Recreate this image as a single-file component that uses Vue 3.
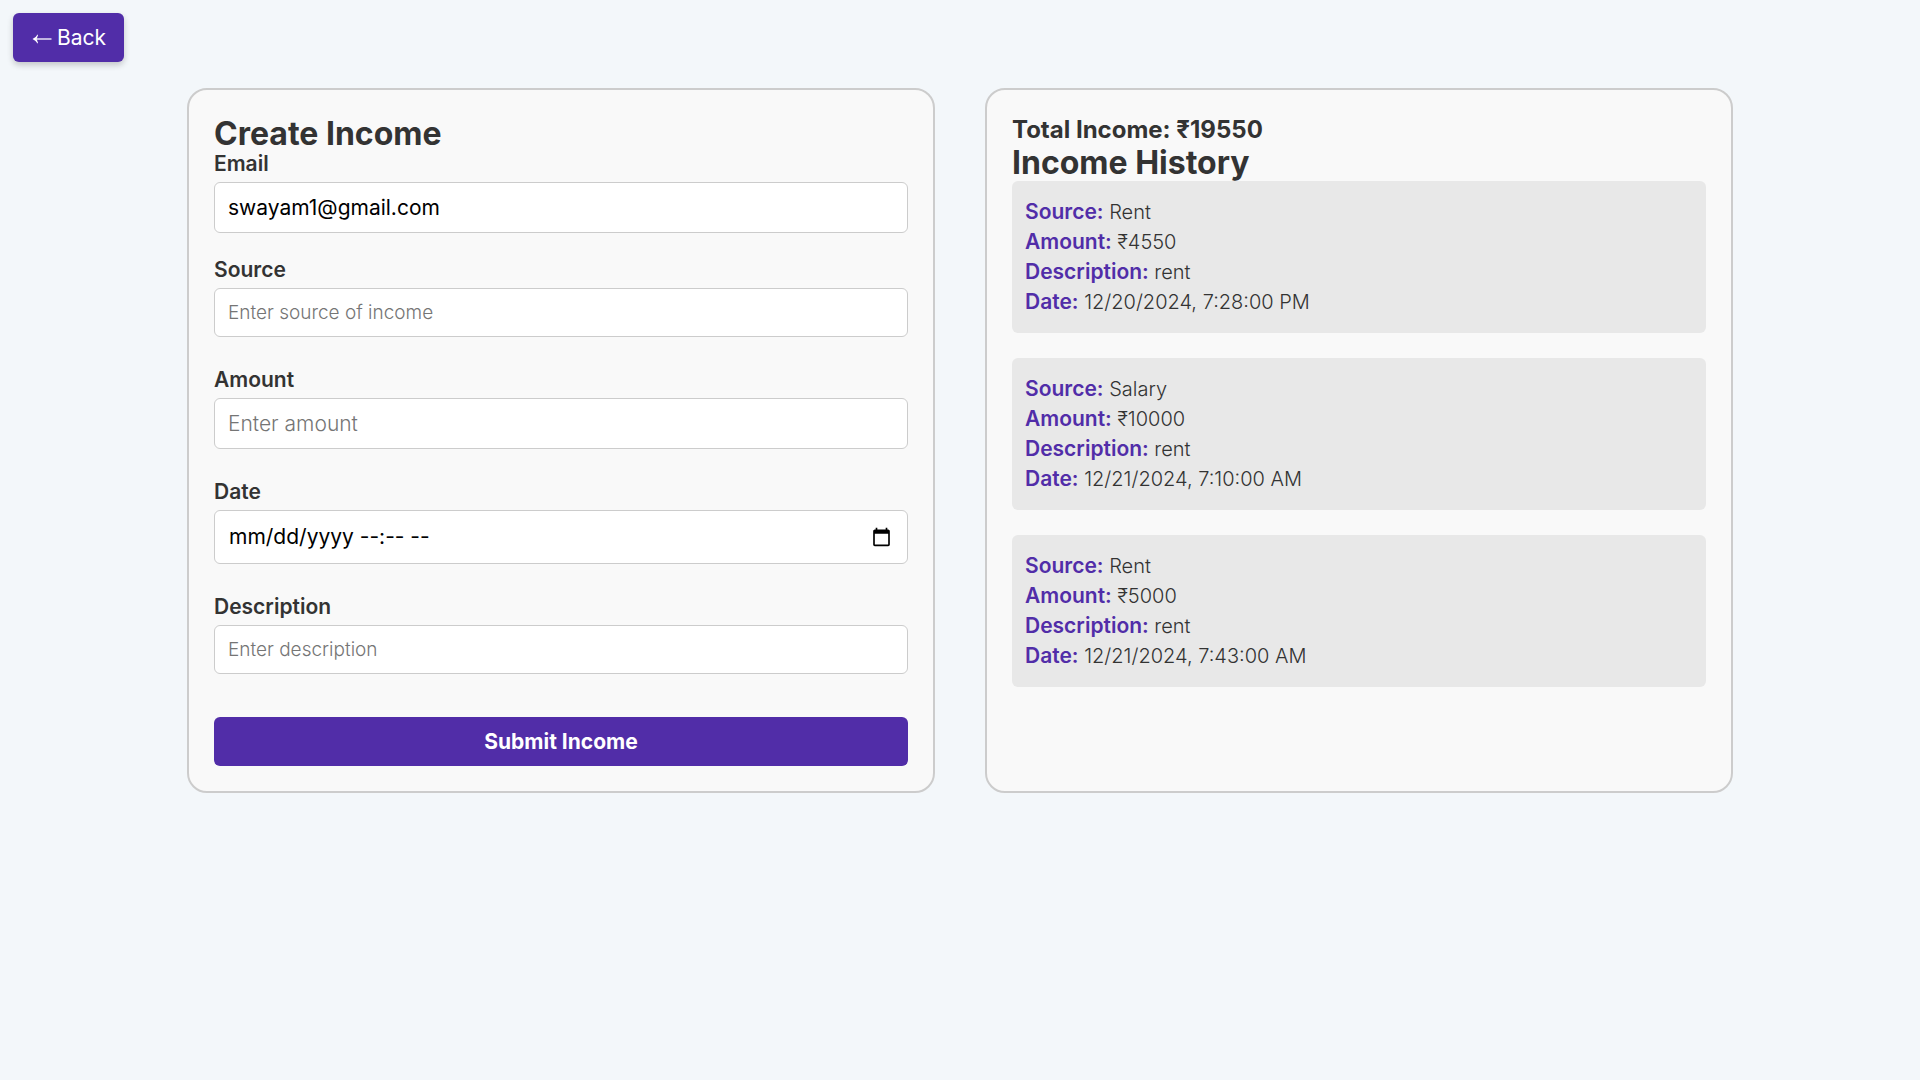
<script setup>
import { computed, ref } from 'vue'

const form = ref({ email: 'swayam1@gmail.com', source: '', amount: '', date: '', description: '' })
const editingDate = ref(false)

const incomes = ref([
  { id: 1, source: 'Rent', amount: 4550, description: 'rent', date: '12/20/2024, 7:28:00 PM' },
  { id: 2, source: 'Salary', amount: 10000, description: 'rent', date: '12/21/2024, 7:10:00 AM' },
  { id: 3, source: 'Rent', amount: 5000, description: 'rent', date: '12/21/2024, 7:43:00 AM' },
])

const total = computed(() => incomes.value.reduce((sum, item) => sum + item.amount, 0))
const showDateHint = computed(() => !form.value.date && !editingDate.value)

function submitIncome() {
  const { source, amount, description, date } = form.value
  if (!source || !amount) return
  incomes.value.push({
    id: incomes.value.length + 1,
    source,
    amount: Number(amount),
    description,
    date: date ? new Date(date).toLocaleString('en-US') : '',
  })
}
</script>

<template>
  <div class="page">
    <header class="topbar">
      <button type="button" class="back">
        <svg class="arrow" viewBox="0 0 20 12" aria-hidden="true">
          <path class="shaft" d="M3 6H19.500" />
          <path class="head" d="M0.500 6Q4 4.500 5.500 1.500L6 2Q5.500 4 4.500 6Q5.500 8 6 10L5.500 10.500Q4 7.500 0.500 6Z" />
        </svg>
        <span>Back</span>
      </button>
    </header>

    <main class="columns">
      <section class="card">
        <h2 class="title">Create Income</h2>
        <form @submit.prevent="submitIncome">
          <div class="field email">
            <label for="email">Email</label>
            <input id="email" v-model="form.email" type="email" />
          </div>
          <div class="field">
            <label for="source">Source</label>
            <input id="source" v-model="form.source" class="small" type="text" placeholder="Enter source of income" />
          </div>
          <div class="field">
            <label for="amount">Amount</label>
            <input id="amount" v-model="form.amount" type="number" placeholder="Enter amount" />
          </div>
          <div class="field">
            <label for="date">Date</label>
            <div class="date-box">
              <input
                id="date"
                v-model="form.date"
                class="date"
                :class="{ hinted: showDateHint }"
                type="datetime-local"
                @focus="editingDate = true"
                @blur="editingDate = false"
              />
              <span v-if="showDateHint" class="date-hint" aria-hidden="true">mm/dd/yyyy --:-- --</span>
            </div>
          </div>
          <div class="field">
            <label for="description">Description</label>
            <input id="description" v-model="form.description" class="small" type="text" placeholder="Enter description" />
          </div>
          <button type="submit" class="submit">Submit Income</button>
        </form>
      </section>

      <section class="card">
        <h3 class="total">Total Income: ₹{{ total }}</h3>
        <h2 class="title">Income History</h2>
        <ul class="history">
          <li v-for="item in incomes" :key="item.id" class="entry">
            <p><strong>Source:</strong> {{ item.source }}</p>
            <p><strong>Amount:</strong> ₹{{ item.amount }}</p>
            <p><strong>Description:</strong> {{ item.description }}</p>
            <p><strong>Date:</strong> {{ item.date }}</p>
          </li>
        </ul>
      </section>
    </main>
  </div>
</template>

<style>
body {
  margin: 0;
  background: #f3f7fa;
}
</style>

<style scoped>
.page {
  color: #333;
  font-family: Inter, "Open Sans", sans-serif;
  font-size: 20px;
  font-weight: 300;
}

.topbar {
  display: flex;
  padding: 13px 13px 26px;
}

button {
  border: 0;
  border-radius: 6px;
  background: #512da8;
  color: #fff;
  font-family: inherit;
  cursor: pointer;
}

.back {
  display: flex;
  align-items: center;
  gap: 5px;
  height: 49px;
  padding: 0 18px 0 19px;
  font-size: 21px;
  font-weight: 400;
  box-shadow: 0 3px 6px rgba(0, 0, 0, 0.2);
}

.arrow {
  width: 20px;
  height: 12px;
  margin-top: 2px;
}

.shaft {
  fill: none;
  stroke: currentColor;
  stroke-width: 1.3;
}

.head {
  fill: currentColor;
}

.columns {
  display: grid;
  grid-template-columns: 1fr 1fr;
  gap: 50px;
  max-width: 1546px;
  margin: 0 auto;
}

.card {
  box-sizing: border-box;
  min-width: 0;
  padding: 25px;
  border: 2px solid #ccc;
  border-radius: 20px;
  background: #f9f9f9;
}

.title {
  margin: 0;
  font-size: 32px;
  font-weight: 700;
  line-height: 37px;
}

.total {
  margin: 0;
  font-size: 24px;
  font-weight: 700;
  line-height: 29px;
}

.field {
  display: flex;
  flex-direction: column;
  gap: 6px;
  margin-bottom: 31px;
}

.email {
  margin-bottom: 25px;
}

label {
  font-size: 21px;
  font-weight: 600;
  line-height: 24px;
}

input {
  box-sizing: border-box;
  width: 100%;
  height: 51px;
  padding: 0 13px;
  border: 1px solid #ccc;
  border-radius: 6px;
  background: #fff;
  color: #000;
  font-family: inherit;
  font-size: 21px;
  font-weight: 400;
}

.small {
  height: 49px;
  font-size: 19px;
}

.date-box {
  position: relative;
  display: flex;
}

.date {
  height: 54px;
}

.date.hinted::-webkit-datetime-edit {
  opacity: 0;
}

.date-hint {
  position: absolute;
  top: 0;
  left: 15px;
  color: #000;
  font-size: 21px;
  font-weight: 400;
  line-height: 54px;
  pointer-events: none;
}

input::placeholder {
  color: #757575;
  font-weight: 300;
}

.submit {
  width: 100%;
  height: 49px;
  margin-top: 12px;
  font-size: 21px;
  font-weight: 700;
}

.history {
  display: flex;
  flex-direction: column;
  gap: 25px;
  margin: 0;
  padding: 0;
  list-style: none;
}

.entry {
  padding: 16px 13px;
  border-radius: 6px;
  background: #e8e8e8;
}

.entry p {
  margin: 0;
  line-height: 30px;
}

.entry strong {
  color: #512da8;
  font-size: 21px;
  font-weight: 600;
}
</style>
